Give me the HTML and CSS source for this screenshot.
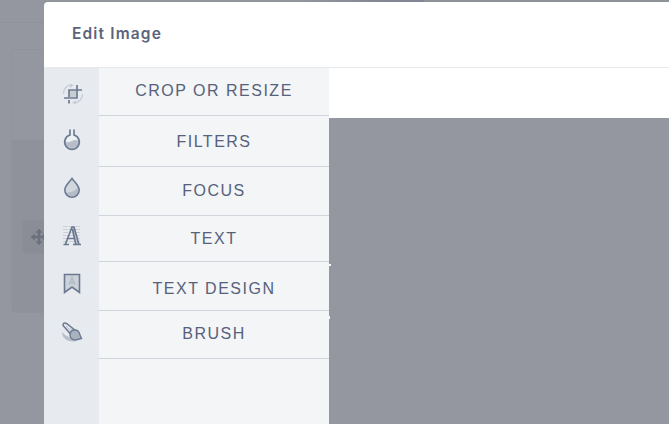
FILE: index.html
```html
<!DOCTYPE html>
<html lang="en">
<head>
<meta charset="utf-8">
<title>Edit Image</title>
<link rel="stylesheet" href="styles.css">
</head>
<body>
<div class="backdrop">
  <div class="topbar"><span class="tab"></span></div>
  <div class="card">
    <div class="card-head"></div>
    <div class="card-body">
      <div class="move">
        <svg width="18" height="18" viewBox="0 0 18 18"><path d="M9 1 12 4.500H10V8h3.500V6L17 9l-3.500 3v-2H10v3.500h2L9 17l-3-3.500h2V10H4.500v2L1 9l3.500-3v2H8V4.500H6z" fill="#6b707d" stroke="#6b707d" stroke-width=".5"/></svg>
      </div>
    </div>
  </div>
</div>
<main class="modal">
  <header class="header"><h1>Edit Image</h1></header>
  <div class="editor">
    <nav class="rail">
      <svg class="icon crop" viewBox="0 0 22 22"><g fill="none"><path d="M1.500 11A9 9 0 0 1 10 1.500M20.500 11a9 9 0 0 1-8.500 9" stroke="#c8cdd4" stroke-width="1.300"/><path d="M8 1l4 1-4 3M14 21l-4-1 4-3" fill="#c8cdd4"/><path d="M8 8h6v6H8z" fill="#c8cdd4"/><path d="M7 14V7h13M2 15h13V2M7 17v3.500" stroke="#6c7990" stroke-width="1.700"/></g></svg>
      <svg class="icon flask" viewBox="0 0 22 22"><path d="M8.500 1v6a7.200 7.200 0 1 0 5 0V1" fill="#eef1f4"/><path d="M4 12.500q4 1.500 7-.5t7 0a7 7 0 0 1-14 .5" fill="#b7bec9"/><path d="M9 .5v5.500a7.300 7.300 0 1 0 4 0V.5" fill="none" stroke="#6c7990" stroke-width="1.700"/></svg>
      <svg class="icon drop" viewBox="0 0 22 22"><path d="M11 1.500C8.500 5 3.800 8.500 3.800 13a7.200 7.200 0 0 0 14.400 0C18.200 8.500 13.500 5 11 1.500z" fill="#d2d7de"/><path d="M17 9c-2 5-6 6-12 7 3 5 11 4 12-1 .7-2 .5-4 0-6z" fill="#b4bcc7"/><path d="M11 1.500C8.500 5 3.800 8.500 3.800 13a7.200 7.200 0 0 0 14.400 0C18.200 8.500 13.500 5 11 1.500z" fill="none" stroke="#6c7990" stroke-width="1.600"/></svg>
      <svg class="icon letter" viewBox="0 0 22 22"><path d="M2 2.500h18M2 5.500h18M2 8.500h18M2 11.500h18M2 14.500h18M2 17.500h18" stroke="#cbd0d8" stroke-dasharray="5 1"/><path d="M11 3h2l4.500 17h-3L11 8z" fill="#c5cbd4"/><path d="M2.500 20.500H8M12 20.500h8M4.500 20l6.500-17h2l4.800 17M11.500 5l3.200 15M7 14.500h6" fill="none" stroke="#6c7990" stroke-width="1.700"/></svg>
      <svg class="icon bookmark" viewBox="0 0 22 22"><path d="M3.500 2.500h15v18L11 15l-7.500 5.500z" fill="#ccd2d9" stroke="#6c7990" stroke-width="1.600"/><path d="m8 13 3-7.500 3 7.500M9 10.500h4" fill="none" stroke="#b1b9c4" stroke-width="1.300"/></svg>
      <svg class="icon brush" viewBox="0 0 22 22"><path d="M1 11c0 7 7 11 14 9l-4-4c-5 0-7-2-10-5z" fill="#b9c0ca"/><path d="M2 4.500Q2 1 5.500 2.500l9 7-4 4.500z" fill="#e4e8ed" stroke="#6c7990" stroke-width="1.500"/><path d="m5 5 6 6.500M9 7l4 3" stroke="#b9c0ca"/><path d="M9 14q0-5 5-5 4 0 5 5l1.500 3.500-6 1.500q-5 0-5.500-5z" fill="#a9b2bf" stroke="#6c7990" stroke-width="1.400"/></svg>
    </nav>
    <ul class="menu">
      <li class="row crop-row">CROP OR RESIZE</li>
      <li class="row filters-row">FILTERS</li>
      <li class="row focus-row">FOCUS</li>
      <li class="row text-row">TEXT</li>
      <li class="row design-row">TEXT DESIGN</li>
      <li class="row brush-row">BRUSH</li>
    </ul>
    <section class="stage"><div class="toolbar"></div><div class="canvas"><i class="tick tick-a"></i><i class="tick tick-b"></i></div></section>
  </div>
</main>
</body>
</html>
```
FILE: styles.css
```css
* { box-sizing: border-box; }
body { margin: 0; width: 669px; height: 424px; overflow: hidden; background: #94979f; font-family: "Liberation Sans", sans-serif; }
.backdrop { position: absolute; inset: 0; }
.topbar { height: 23px; border-bottom: 1px solid #8f929a; background: linear-gradient(#8f9297 2px, #94979f 2px); }
.tab { display: block; width: 424px; height: 2px; background: linear-gradient(90deg, #94979f 44px, #92959c 44px 300px, #858695 380px); }
.card { width: 100px; height: 264px; margin: 26px 0 0 11px; border: 1px solid #90939b; border-radius: 4px; overflow: hidden; }
.card-head { height: 90px; }
.card-body { height: 173px; padding: 81px 0 0 11px; background: #8f929a; }
.move { width: 34px; height: 32px; padding: 7px; border-radius: 4px; background: #8a8d95; box-shadow: 0 0 2px #858890; }
.move svg { display: block; }
.modal { position: relative; width: 640px; height: 422px; margin: 2px 0 0 44px; border-radius: 4px 0 0 0; overflow: hidden; background: #fff; }
.header { height: 66px; padding: 21px 28px; border-bottom: 1px solid #e7eaef; }
h1 { margin: 0; font: 600 15.5px/22px Inter, sans-serif; letter-spacing: 1.15px; color: #5b647b; white-space: nowrap; }
.editor { display: flex; height: 356px; }
.rail { width: 55px; flex: none; background: #e7ebf0; display: flex; flex-direction: column; align-items: center; padding-top: 15px; }
.icon { width: 22px; height: 22px; flex: none; margin-left: 1px; }
.crop { margin-left: 2px; }
.flask { margin-top: 24px; }
.drop { margin-top: 26px; }
.letter { margin-top: 25px; }
.bookmark { margin-top: 26px; }
.brush { margin-top: 27px; }
.menu { width: 230px; flex: none; margin: 0; padding: 0; list-style: none; background: #f3f5f7; }
.row { display: flex; align-items: center; justify-content: center; border-bottom: 1px solid #d0d4dd; font-size: 16px; line-height: 20px; letter-spacing: 1.5px; color: #56617b; white-space: nowrap; }
.crop-row { height: 48px; padding-bottom: 1px; }
.filters-row { height: 51px; padding-top: 1px; }
.focus-row { height: 49px; }
.text-row { height: 46px; }
.design-row { height: 49px; padding-top: 5px; }
.brush-row { height: 48px; padding-bottom: 1px; }
.stage { flex: 1; display: flex; flex-direction: column; }
.toolbar { height: 50px; background: #fff; }
.canvas { position: relative; flex: 1; background: #94979f; }
.tick { position: absolute; left: 0; background: #fff; }
.tick-a { top: 146px; width: 2px; height: 2px; }
.tick-b { top: 198px; width: 1px; height: 3px; }
```
